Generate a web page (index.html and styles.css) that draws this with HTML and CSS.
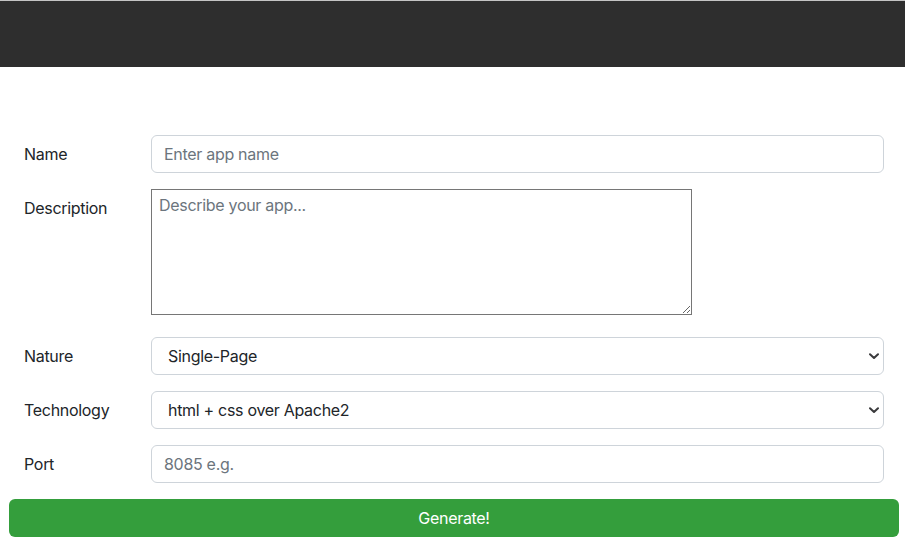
FILE: index.html
```html
<!DOCTYPE html>
<html lang="en">
<head>
<meta charset="utf-8">
<title>App Generator</title>
<link rel="stylesheet" href="styles.css">
</head>
<body>
<header class="topbar"></header>
<main class="page">
  <form class="app-form">
    <div class="form-row">
      <label class="form-label" for="name">Name</label>
      <div class="form-field"><input class="form-input" id="name" type="text" placeholder="Enter app name"></div>
    </div>
    <div class="form-row form-row-tall">
      <label class="form-label" for="desc">Description</label>
      <div class="form-field"><textarea class="form-textarea" id="desc" placeholder="Describe your app..."></textarea></div>
    </div>
    <div class="form-row">
      <label class="form-label" for="nature">Nature</label>
      <div class="form-field select-wrap">
        <select class="form-select" id="nature"><option>Single-Page</option></select>
        <svg class="select-arrow" width="10" height="7" viewBox="0 0 10 7"><path d="M1 1.2 L5 5 L9 1.2" fill="none" stroke="#3a3a3c" stroke-width="2" stroke-linecap="round" stroke-linejoin="round"/></svg>
      </div>
    </div>
    <div class="form-row">
      <label class="form-label" for="tech">Technology</label>
      <div class="form-field select-wrap">
        <select class="form-select" id="tech"><option>html + css over Apache2</option></select>
        <svg class="select-arrow" width="10" height="7" viewBox="0 0 10 7"><path d="M1 1.2 L5 5 L9 1.2" fill="none" stroke="#3a3a3c" stroke-width="2" stroke-linecap="round" stroke-linejoin="round"/></svg>
      </div>
    </div>
    <div class="form-row">
      <label class="form-label" for="port">Port</label>
      <div class="form-field"><input class="form-input" id="port" type="text" placeholder="8085 e.g."></div>
    </div>
    <button type="button" class="btn-generate">Generate!</button>
  </form>
</main>
</body>
</html>
```

FILE: styles.css
```css
* { box-sizing: border-box; }
html, body {
  margin: 0;
  padding: 0;
  background: #fff;
  font-family: Inter, "Liberation Sans", sans-serif;
  font-size: 16px;
  letter-spacing: -0.3px;
  color: #212529;
}
.topbar {
  height: 67px;
  background: #2e2e2e;
  border-top: 1px solid #c4c4c4;
}
.page {
  padding: 68px 6px 0 9px;
}
.app-form {
  display: flex;
  flex-direction: column;
}
.form-row {
  display: flex;
  align-items: flex-start;
  padding: 0 15px;
  margin-bottom: 16px;
}
.form-row-tall {
  margin-bottom: 22px;
}
.form-label {
  width: 127px;
  flex: none;
  padding-top: 7px;
  line-height: 24px;
}
.form-field {
  flex: 1;
  min-width: 0;
}
.form-input,
.form-select {
  display: block;
  width: 100%;
  height: 38px;
  padding: 6px 12px;
  font: inherit;
  letter-spacing: -0.3px;
  line-height: 24px;
  color: #212529;
  background: #fff;
  border: 1px solid #ced4da;
  border-radius: 6px;
  outline: none;
}
.form-input::placeholder {
  color: #6c757d;
  opacity: 1;
}
.form-textarea {
  display: block;
  width: 541px;
  height: 126px;
  padding: 5px 7px;
  font: inherit;
  letter-spacing: -0.3px;
  line-height: 20px;
  border: 1px solid #767676;
  border-radius: 0;
  resize: both;
}
.form-textarea::placeholder {
  color: #6c757d;
  opacity: 1;
}
.select-wrap {
  position: relative;
}
.form-select {
  appearance: none;
  -webkit-appearance: none;
  padding-left: 16px;
}
.select-arrow {
  position: absolute;
  right: 5px;
  top: 16px;
  pointer-events: none;
}
.btn-generate {
  display: block;
  width: 890px;
  height: 38px;
  padding: 0;
  font: inherit;
  letter-spacing: -0.3px;
  line-height: 24px;
  color: #fff;
  background: #349e3c;
  border: none;
  border-radius: 6px;
}
```
